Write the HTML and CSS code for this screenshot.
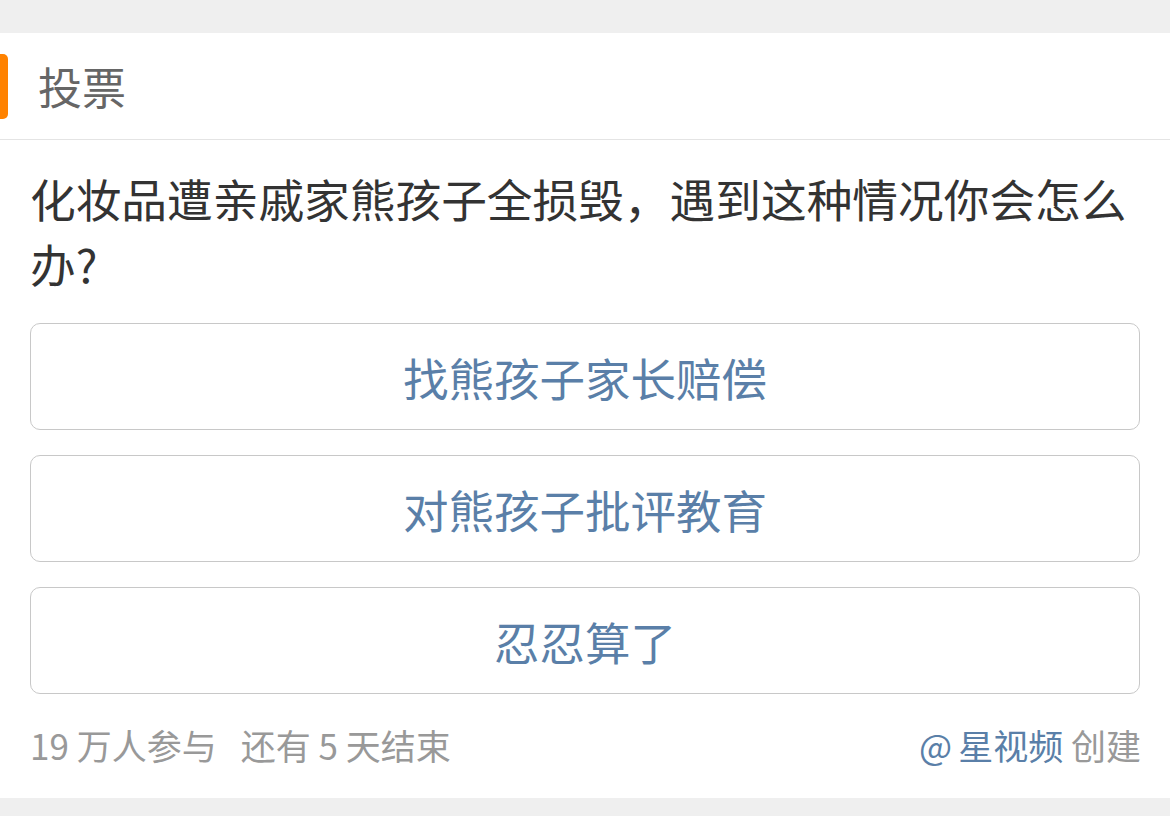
FILE: index.html
```html
<!DOCTYPE html>
<html lang="zh-CN">
<head>
<meta charset="utf-8">
<link rel="stylesheet" href="styles.css">
</head>
<body>
<div class="page">
  <div class="card">
    <div class="header">
      <span class="accent"></span>
      <span class="title">投票</span>
    </div>
    <div class="body">
      <p class="question">化妆品遭亲戚家熊孩子全损毁，遇到这种情况你会怎么办?</p>
      <div class="options">
        <div class="option">找熊孩子家长赔偿</div>
        <div class="option">对熊孩子批评教育</div>
        <div class="option">忍忍算了</div>
      </div>
      <div class="footer">
        <div class="stats"><span>19 万人参与</span><span>还有 5 天结束</span></div>
        <div class="creator"><span class="user"><span class="at">@</span>星视频</span> 创建</div>
      </div>
    </div>
  </div>
</div>
</body>
</html>
```
FILE: styles.css
```css
html, body {
  margin: 0;
  padding: 0;
}
body {
  background: #efefef;
  font-family: "Noto Sans CJK SC", "Noto Sans", sans-serif;
  width: 1170px;
  height: 816px;
  overflow: hidden;
}
.page {
  padding-top: 33px;
}
.card {
  background: #fff;
  height: 765px;
  display: flex;
  flex-direction: column;
}
.header {
  height: 106px;
  border-bottom: 1px solid #e4e4e4;
  display: flex;
  align-items: center;
}
.accent {
  width: 8px;
  height: 65px;
  background: #ff8200;
  border-radius: 0 5px 5px 0;
}
.title {
  margin-left: 30px;
  font-size: 44px;
  color: #666;
  line-height: 1;
}
.body {
  padding: 26px 30px 0 30px;
}
.question {
  margin: 0;
  font-size: 45.7px;
  line-height: 65px;
  color: #333;
}
.options {
  margin-top: 27px;
  display: flex;
  flex-direction: column;
  gap: 25px;
}
.option {
  height: 105px;
  border: 1px solid #c8c8c8;
  border-radius: 10px;
  display: flex;
  align-items: center;
  justify-content: center;
  font-size: 45.5px;
  color: #5a7fa8;
}
.footer {
  margin-top: 25px;
  height: 50px;
  display: flex;
  justify-content: space-between;
  align-items: center;
  font-size: 35px;
  color: #999;
}
.stats {
  display: flex;
  gap: 24px;
}
.at {
  margin-right: 6px;
}
.user {
  color: #5a7fa8;
}
.creator {
  margin-right: -1px;
}
```
